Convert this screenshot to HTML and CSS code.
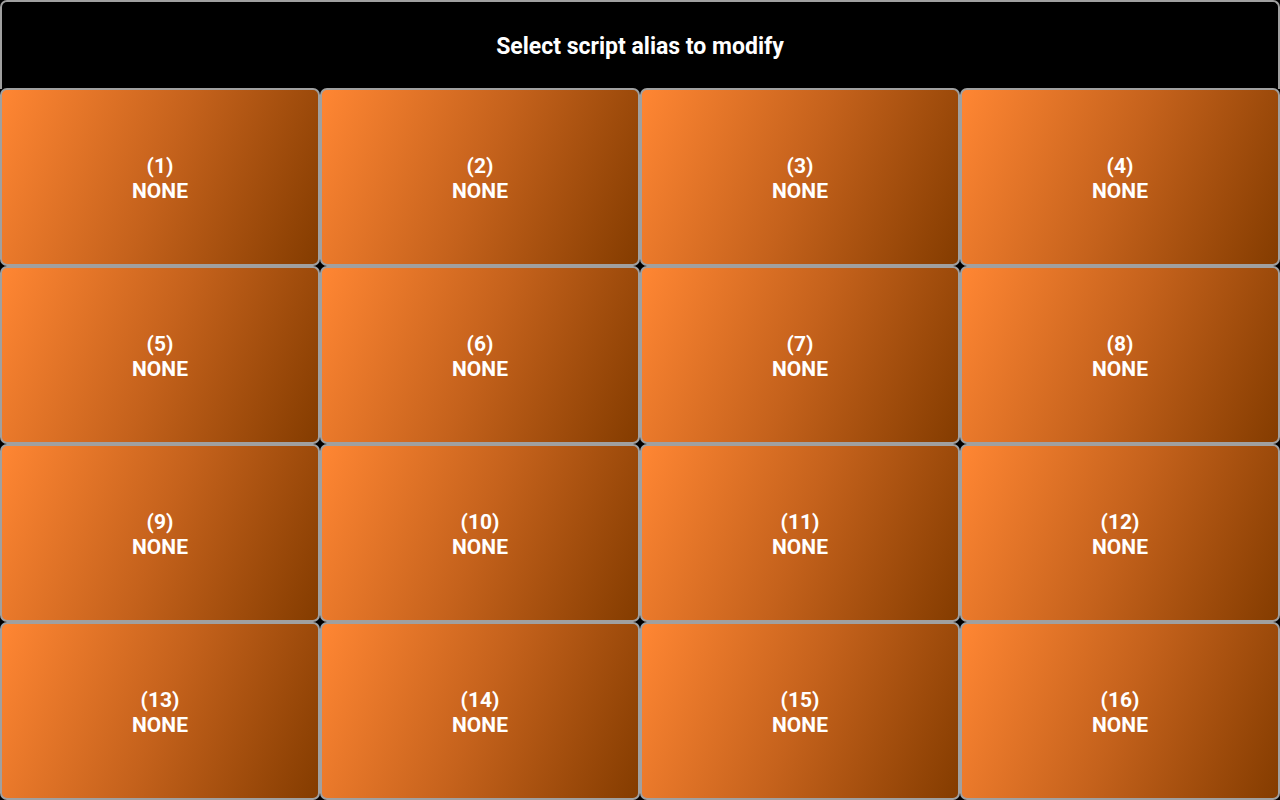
FILE: index.html
```html
<!DOCTYPE html>
<html>
<head>
<meta charset="utf-8">
<link rel="stylesheet" href="styles.css">
</head>
<body>
<div class="screen">
  <div class="header">Select script alias to modify</div>
  <div class="grid">
    <div class="btn"><span>(1)</span><span>NONE</span></div>
    <div class="btn"><span>(2)</span><span>NONE</span></div>
    <div class="btn"><span>(3)</span><span>NONE</span></div>
    <div class="btn"><span>(4)</span><span>NONE</span></div>
    <div class="btn"><span>(5)</span><span>NONE</span></div>
    <div class="btn"><span>(6)</span><span>NONE</span></div>
    <div class="btn"><span>(7)</span><span>NONE</span></div>
    <div class="btn"><span>(8)</span><span>NONE</span></div>
    <div class="btn"><span>(9)</span><span>NONE</span></div>
    <div class="btn"><span>(10)</span><span>NONE</span></div>
    <div class="btn"><span>(11)</span><span>NONE</span></div>
    <div class="btn"><span>(12)</span><span>NONE</span></div>
    <div class="btn"><span>(13)</span><span>NONE</span></div>
    <div class="btn"><span>(14)</span><span>NONE</span></div>
    <div class="btn"><span>(15)</span><span>NONE</span></div>
    <div class="btn"><span>(16)</span><span>NONE</span></div>
  </div>
</div>
</body>
</html>
```
FILE: styles.css
```css
html, body {
  margin: 0;
  padding: 0;
  background: #000;
}
.screen {
  width: 1280px;
  height: 800px;
  display: flex;
  flex-direction: column;
  font-family: Roboto, "Liberation Sans", sans-serif;
  color: #fff;
}
.header {
  box-sizing: border-box;
  height: 89px;
  border: 2px solid #a0a0a0;
  border-bottom: none;
  border-radius: 7px 7px 0 0;
  background: #000;
  display: flex;
  align-items: center;
  justify-content: center;
  font-weight: 700;
  font-size: 23px;
  padding-top: 1px;
}
.grid {
  flex: 1;
  display: grid;
  grid-template-columns: repeat(4, 320px);
  grid-template-rows: repeat(4, 1fr);
  margin-top: -1px;
}
.btn {
  box-sizing: border-box;
  border: 2px solid #a0a0a0;
  border-radius: 7px;
  background: linear-gradient(112deg, #ff8633 0%, #c5621c 50%, #843c00 100%);
  display: flex;
  flex-direction: column;
  align-items: center;
  justify-content: center;
  font-weight: 700;
  font-size: 21px;
  line-height: 25px;
  padding-top: 4px;
}
```
